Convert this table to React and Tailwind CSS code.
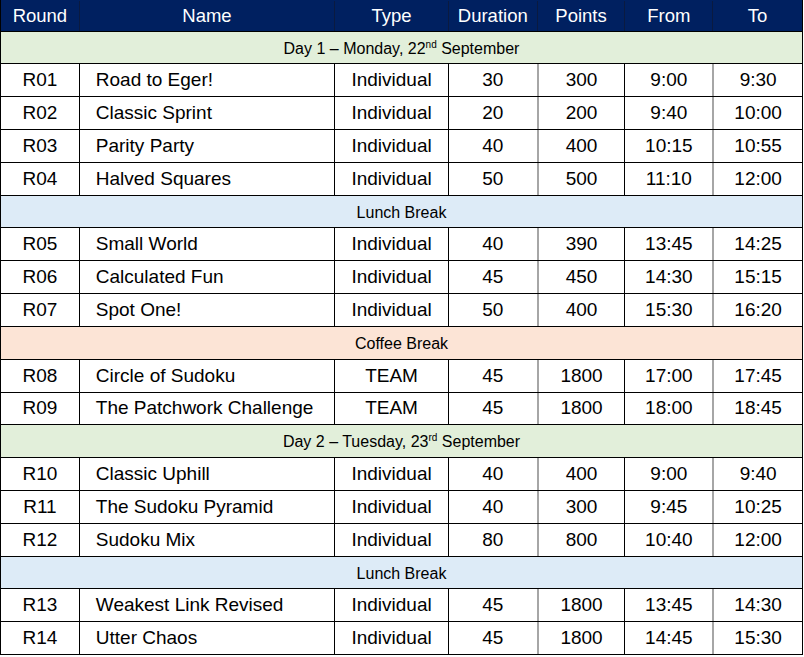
import React from "react";

const cols = [
  { w: "w-[78px]", align: "justify-center" },
  { w: "w-[256px]", align: "justify-start pl-[16px]" },
  { w: "w-[114px]", align: "justify-center" },
  { w: "w-[89px]", align: "justify-center" },
  { w: "w-[88px]", align: "justify-center" },
  { w: "w-[88px]", align: "justify-center" },
  { w: "w-[90px]", align: "justify-center" },
];

const dataBorders = [
  "",
  "border-l border-black",
  "border-l border-black",
  "border-l border-black",
  "border-l-2 border-[#a6a6a6]",
  "border-l border-black",
  "border-l-2 border-[#a6a6a6]",
];

const Sup = ({ children }) => (
  <sup className="text-[10px] relative -top-[6px] align-baseline">{children}</sup>
);

const rows = [
  { type: "day", bg: "bg-[#e2efda]", h: "h-[32px]", label: <>Day 1 – Monday, 22<Sup>nd</Sup> September</> },
  { d: ["R01", "Road to Eger!", "Individual", "30", "300", "9:00", "9:30"], h: "h-[33px]" },
  { d: ["R02", "Classic Sprint", "Individual", "20", "200", "9:40", "10:00"], h: "h-[33px]" },
  { d: ["R03", "Parity Party", "Individual", "40", "400", "10:15", "10:55"], h: "h-[33px]" },
  { d: ["R04", "Halved Squares", "Individual", "50", "500", "11:10", "12:00"], h: "h-[33px]" },
  { type: "break", bg: "bg-[#ddebf7]", h: "h-[32px]", label: "Lunch Break" },
  { d: ["R05", "Small World", "Individual", "40", "390", "13:45", "14:25"], h: "h-[33px]" },
  { d: ["R06", "Calculated Fun", "Individual", "45", "450", "14:30", "15:15"], h: "h-[33px]" },
  { d: ["R07", "Spot One!", "Individual", "50", "400", "15:30", "16:20"], h: "h-[33px]" },
  { type: "break", bg: "bg-[#fce4d6]", h: "h-[33px]", label: "Coffee Break" },
  { d: ["R08", "Circle of Sudoku", "TEAM", "45", "1800", "17:00", "17:45"], h: "h-[33px]" },
  { d: ["R09", "The Patchwork Challenge", "TEAM", "45", "1800", "18:00", "18:45"], h: "h-[32px]" },
  { type: "day", bg: "bg-[#e2efda]", h: "h-[33px]", label: <>Day 2 – Tuesday, 23<Sup>rd</Sup> September</> },
  { d: ["R10", "Classic Uphill", "Individual", "40", "400", "9:00", "9:40"], h: "h-[33px]" },
  { d: ["R11", "The Sudoku Pyramid", "Individual", "40", "300", "9:45", "10:25"], h: "h-[33px]" },
  { d: ["R12", "Sudoku Mix", "Individual", "80", "800", "10:40", "12:00"], h: "h-[33px]" },
  { type: "break", bg: "bg-[#ddebf7]", h: "h-[32px]", label: "Lunch Break" },
  { d: ["R13", "Weakest Link Revised", "Individual", "45", "1800", "13:45", "14:30"], h: "h-[33px]" },
  { d: ["R14", "Utter Chaos", "Individual", "45", "1800", "14:45", "15:30"], h: "h-[33px]" },
];

const headers = ["Round", "Name", "Type", "Duration", "Points", "From", "To"];

export default function App() {
  return (
    <div className="w-[804px] h-[657px] bg-white" style={{ fontFamily: '"Liberation Sans", Arial, sans-serif' }}>
      <div className="w-[803px] border-l border-r border-black flex flex-col">
        <div className="flex h-[32px] bg-[#002060] border-b border-black text-white text-[18.5px] pt-[1px]">
          {headers.map((h, i) => (
            <div key={h} className={`${cols[i].w} flex items-center justify-center ${i > 0 ? "border-l border-[#0a1a40]" : ""}`}>
              {h}
            </div>
          ))}
        </div>
        {rows.map((r, idx) =>
          r.type ? (
            <div key={idx} className={`${r.h} ${r.bg} border-b border-black flex items-center justify-center text-[16px] text-black pt-[2px]`}>
              <span>{r.label}</span>
            </div>
          ) : (
            <div key={idx} className={`${r.h} flex border-b border-black text-[19px] text-black`}>
              {r.d.map((c, i) => (
                <div key={i} className={`${cols[i].w} ${cols[i].align} ${dataBorders[i]} flex items-center`}>
                  {c}
                </div>
              ))}
            </div>
          )
        )}
      </div>
    </div>
  );
}
